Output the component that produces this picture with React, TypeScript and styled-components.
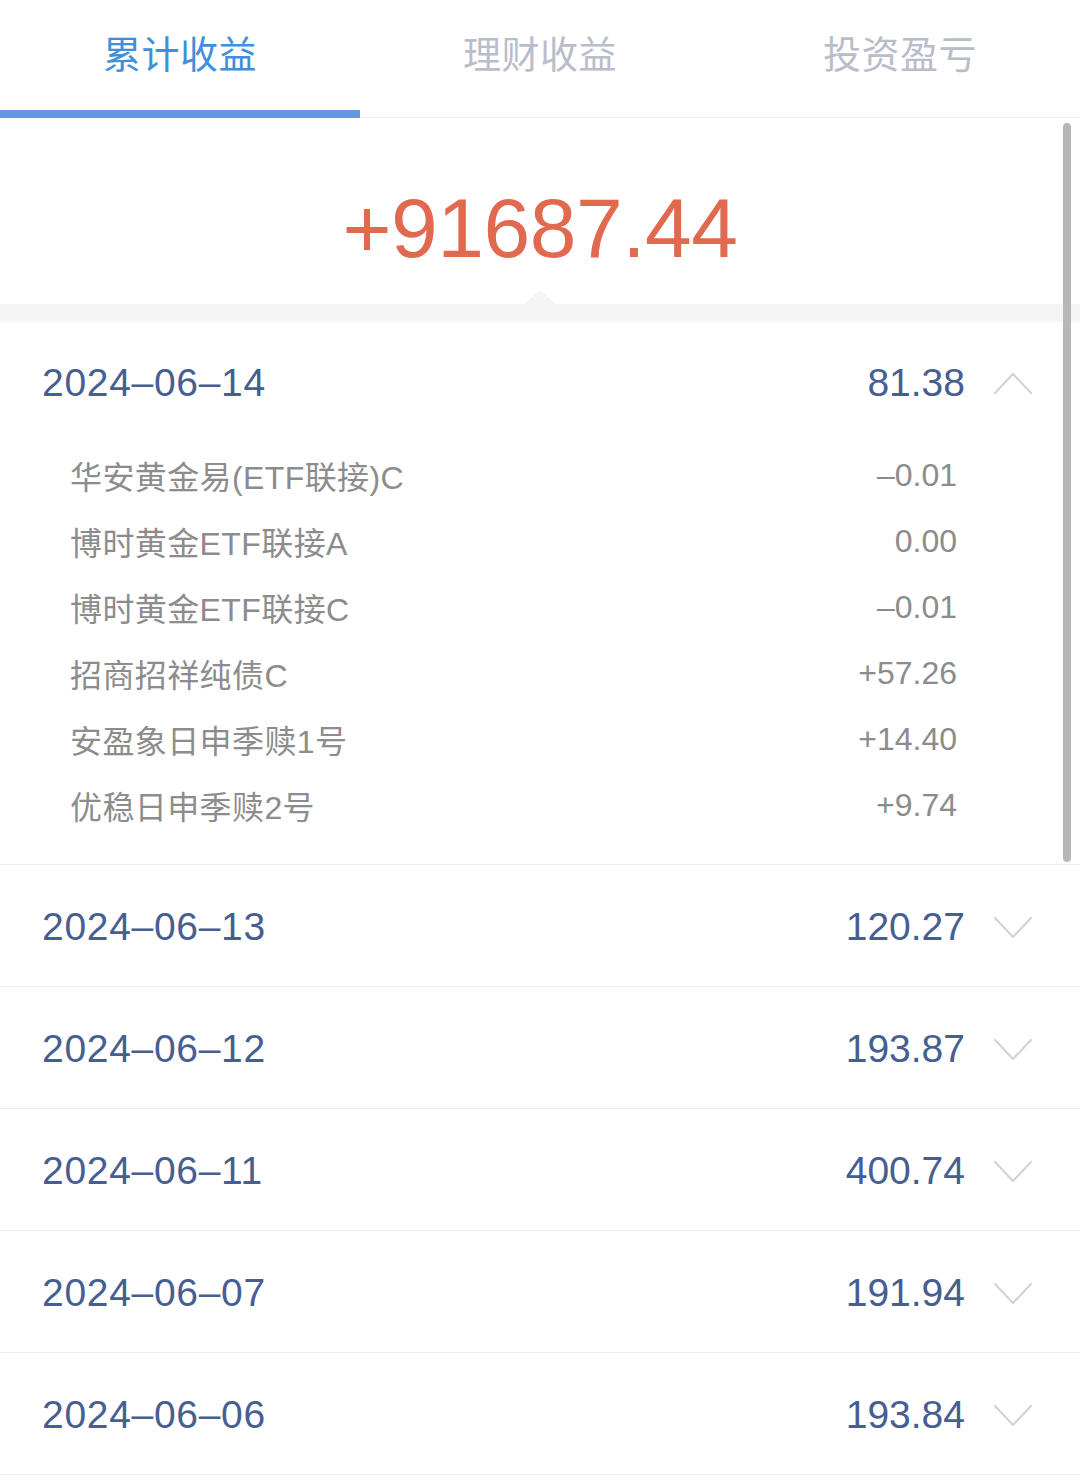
import React from 'react';
import styled, { createGlobalStyle } from 'styled-components';

const GlobalStyle = createGlobalStyle`
  body {
    margin: 0;
    background: #fff;
    font-family: "Liberation Sans", "Noto Sans CJK SC", sans-serif;
  }
`;

const Page = styled.div`
  position: relative;
  width: 1080px;
  background: #fff;
`;

const TabBar = styled.div`
  display: grid;
  grid-template-columns: repeat(3, 1fr);
  height: 118px;
  box-sizing: border-box;
  border-bottom: 1px solid #ececec;
`;

const Tab = styled.div<{ $active?: boolean }>`
  display: flex;
  align-items: center;
  justify-content: center;
  height: 118px;
  box-sizing: border-box;
  padding-bottom: 8px;
  font-family: "Noto Sans CJK SC", sans-serif;
  font-size: 38px;
  letter-spacing: 0.5px;
  color: ${(p) => (p.$active ? '#3f90d8' : '#b9bdca')};
  border-bottom: 8px solid ${(p) => (p.$active ? '#6597dd' : 'transparent')};
`;

const Hero = styled.div`
  position: relative;
  height: 186px;
  box-sizing: border-box;
  padding-top: 68px;
  text-align: center;
  &::after {
    content: '';
    position: absolute;
    left: 50%;
    bottom: 0;
    transform: translateX(-50%);
    border-left: 16px solid transparent;
    border-right: 16px solid transparent;
    border-bottom: 14px solid #f5f5f5;
  }
`;

const Total = styled.div`
  font-size: 84px;
  line-height: 84px;
  color: #e0694f;
  letter-spacing: -0.5px;
`;

const Band = styled.div`
  height: 18px;
  background: #f5f5f5;
`;

const Group = styled.div<{ $open?: boolean }>`
  border-bottom: 1px solid #ececec;
  padding-bottom: ${(p) => (p.$open ? '26px' : '0')};
`;

const Header = styled.div<{ $open?: boolean }>`
  display: flex;
  align-items: center;
  height: ${(p) => (p.$open ? '122px' : '121px')};
  padding: ${(p) => (p.$open ? '0' : '2px')} 47px 0 42px;
  box-sizing: border-box;
  font-size: 39px;
  color: #465e91;
`;

const DateText = styled.span`
  flex: 1;
  letter-spacing: 0.7px;
`;

const Amount = styled.span`
  margin-right: 28px;
`;

const SubList = styled.div`
  padding: 0 123px 0 70px;
`;

const SubRow = styled.div`
  display: flex;
  align-items: center;
  justify-content: space-between;
  height: 66px;
  font-size: 32px;
  color: #8c8c8c;
  &:first-child {
    margin-top: -2px;
  }
`;

const SubName = styled.span`
  letter-spacing: 0.4px;
`;

const Scrollbar = styled.div`
  position: absolute;
  right: 9px;
  top: 123px;
  width: 8px;
  height: 739px;
  border-radius: 4px;
  background: #b7b7b7;
`;

const Chevron = ({ up }: { up?: boolean }) => (
  <svg width="40" height="24" viewBox="0 0 40 24" fill="none">
    <path
      d={up ? 'M2 22 L20 3 L38 22' : 'M2 3 L20 22 L38 3'}
      stroke="#d4d4d4"
      strokeWidth="2.2"
      strokeLinecap="round"
      strokeLinejoin="round"
    />
  </svg>
);

const details = [
  { name: '华安黄金易(ETF联接)C', value: '–0.01' },
  { name: '博时黄金ETF联接A', value: '0.00' },
  { name: '博时黄金ETF联接C', value: '–0.01' },
  { name: '招商招祥纯债C', value: '+57.26' },
  { name: '安盈象日申季赎1号', value: '+14.40' },
  { name: '优稳日申季赎2号', value: '+9.74' },
];

const days = [
  { date: '2024–06–13', value: '120.27' },
  { date: '2024–06–12', value: '193.87' },
  { date: '2024–06–11', value: '400.74' },
  { date: '2024–06–07', value: '191.94' },
  { date: '2024–06–06', value: '193.84' },
];

export default function App() {
  return (
    <Page>
      <GlobalStyle />
      <TabBar>
        <Tab $active>累计收益</Tab>
        <Tab>理财收益</Tab>
        <Tab>投资盈亏</Tab>
      </TabBar>
      <Hero>
        <Total>+91687.44</Total>
      </Hero>
      <Band />
      <Group $open>
        <Header $open>
          <DateText>2024–06–14</DateText>
          <Amount>81.38</Amount>
          <Chevron up />
        </Header>
        <SubList>
          {details.map((d) => (
            <SubRow key={d.name}>
              <SubName>{d.name}</SubName>
              <span>{d.value}</span>
            </SubRow>
          ))}
        </SubList>
      </Group>
      {days.map((d) => (
        <Group key={d.date}>
          <Header>
            <DateText>{d.date}</DateText>
            <Amount>{d.value}</Amount>
            <Chevron />
          </Header>
        </Group>
      ))}
      <Scrollbar />
    </Page>
  );
}
